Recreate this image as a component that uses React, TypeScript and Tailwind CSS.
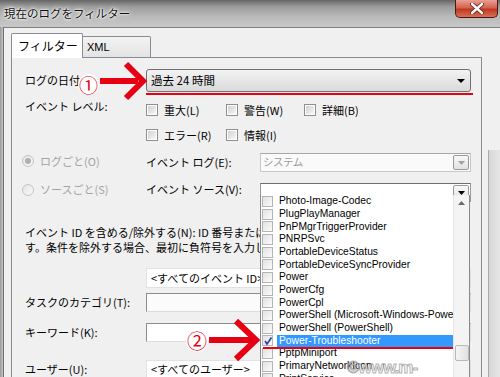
import React from "react";

const listItems = [
  "Photo-Image-Codec",
  "PlugPlayManager",
  "PnPMgrTriggerProvider",
  "PNRPSvc",
  "PortableDeviceStatus",
  "PortableDeviceSyncProvider",
  "Power",
  "PowerCfg",
  "PowerCpl",
  "PowerShell (Microsoft-Windows-PowerShell)",
  "PowerShell (PowerShell)",
  "Power-Troubleshooter",
  "PptpMiniport",
  "PrimaryNetworkIcon",
  "PrintService",
];

function Check() {
  return (
    <span className="inline-flex w-[12px] h-[12px] shrink-0 border border-[#8e8f8f] bg-white p-[1px]">
      <span className="flex-1 bg-gradient-to-br from-[#cfd2d6] to-[#f7f7f7]" />
    </span>
  );
}

function Radio({ dot = false }: { dot?: boolean }) {
  return (
    <span className="inline-flex w-[12px] h-[12px] shrink-0 rounded-full border border-[#c4c4c4] bg-gradient-to-br from-[#e4e4e4] to-[#fafafa] items-center justify-center">
      {dot && <span className="w-[6px] h-[6px] rounded-full bg-[#b0b0b0]" />}
    </span>
  );
}

function ListCheck({ checked = false }: { checked?: boolean }) {
  return (
    <span className="relative inline-flex w-[11px] h-[11px] shrink-0 border border-[#b4b4b4] bg-gradient-to-br from-[#e2e2e2] to-[#fbfbfb]">
      {checked && (
        <svg className="absolute left-[0px] top-[0px]" width="10" height="10" viewBox="0 0 10 10">
          <path d="M2 5 L4 8 L8.5 1.5" fill="none" stroke="#2b3fa8" strokeWidth="1.6" />
        </svg>
      )}
    </span>
  );
}

function DropBtn({ disabled = false }: { disabled?: boolean }) {
  return (
    <span className="mr-[1px] w-[16px] h-[15px] flex items-center justify-center border border-[#9a9a9a] rounded-[2px] bg-gradient-to-b from-[#f8f8f8] to-[#e2e2e2]">
      <svg width="7" height="4" viewBox="0 0 7 4">
        <path d="M0 0 L7 0 L3.5 4 Z" fill={disabled ? "#a0a0a0" : "#000"} />
      </svg>
    </span>
  );
}

export default function App() {
  return (
    <div className="relative w-[500px] h-[377px] overflow-hidden flex flex-col bg-[#f0f0f0] font-['Noto_Sans_CJK_JP',sans-serif] text-[11px] leading-none text-black">
      {/* Title bar */}
      <div className="h-[27px] shrink-0 flex items-start justify-between bg-[linear-gradient(to_bottom,#666666_0%,#9c9c9c_25%,#b8b8b8_60%,#c8c8c8_100%)]">
        <div className="pl-[4px] pt-[8px] text-[11.5px] text-[#111] [text-shadow:0_0_6px_#fff,0_0_3px_#fff,0_0_2px_#fff]">
          現在のログをフィルター
        </div>
        <div className="mr-[2px] w-[43px] h-[18px] flex items-center justify-center rounded-b-[5px] border border-t-0 border-[#4a1a12] bg-[linear-gradient(to_bottom,#e8a093_0%,#d4634f_45%,#c0391f_55%,#d8705a_100%)]">
          <svg width="14" height="11" viewBox="0 0 14 11">
            <path d="M2 1 L12 10 M12 1 L2 10" stroke="#5a1c12" strokeWidth="4" strokeLinecap="round" />
            <path d="M2 1 L12 10 M12 1 L2 10" stroke="#ffffff" strokeWidth="2.4" strokeLinecap="round" />
          </svg>
        </div>
      </div>

      <div className="flex flex-1 min-h-0">
        <div className="w-[4px] shrink-0 bg-[linear-gradient(to_right,#9a9a9a,#c4c4c4)] border-r border-[#6f6f6f]" />
        <div className="flex-1 flex border-t border-[#7f7f7f] bg-[#f0f0f0]">
          <div className="pl-[7px] pt-[5px] flex flex-col">
            {/* Tabs */}
            <div className="h-[24px] flex items-end">
              <div className="relative z-10 -mb-[1px] w-[72px] h-[25px] border-l border-t border-r border-[#898c95] rounded-t-[2px] bg-white flex items-start pt-[6px] pl-[6px] text-[12px]">
                フィルター
              </div>
              <div className="w-[68px] h-[21px] border-t border-r border-[#898c95] rounded-tr-[2px] bg-gradient-to-b from-[#f3f3f3] to-[#e3e3e3] flex items-center pl-[4px] text-[11px] font-['Liberation_Sans',sans-serif]">
                XML
              </div>
            </div>

            {/* Panel */}
            <div className="w-[471px] flex-1 border-l border-t border-r border-[#898c95] bg-[#f0f0f0] pl-[10px] pr-[10px] flex flex-col">
              {/* Date */}
              <div className="mt-[11px] h-[23px] flex items-center">
                <div className="w-[124px] pl-[3px]">ログの日付(D):</div>
                <div className="flex-1 h-[23px] border border-[#707070] rounded-[3px] bg-gradient-to-b from-[#f3f3f3] to-[#dadada] flex items-center justify-between pl-[4px] pr-[5px]">
                  <span className="text-[11.5px]">過去 24 時間</span>
                  <svg width="8" height="4" viewBox="0 0 8 4">
                    <path d="M0 0 L8 0 L4 4 Z" fill="#000" />
                  </svg>
                </div>
              </div>

              {/* Level */}
              <div className="mt-[6px] flex">
                <div className="w-[124px] pl-[3px] pt-[3px]">イベント レベル:</div>
                <div className="flex flex-col gap-[1px]">
                  <div className="h-[24px] flex items-center">
                    <div className="w-[80px] flex items-center gap-[6px]"><Check /><span>重大(L)</span></div>
                    <div className="w-[78px] flex items-center gap-[6px]"><Check /><span>警告(W)</span></div>
                    <div className="flex items-center gap-[6px]"><Check /><span>詳細(B)</span></div>
                  </div>
                  <div className="h-[24px] flex items-center">
                    <div className="w-[80px] flex items-center gap-[6px]"><Check /><span>エラー(R)</span></div>
                    <div className="w-[78px] flex items-center gap-[6px]"><Check /><span>情報(I)</span></div>
                  </div>
                </div>
              </div>

              {/* Event log */}
              <div className="mt-[6px] h-[19px] flex items-center">
                <div className="w-[124px] flex items-center gap-[6px] text-[#a3a3a3] pb-[3px]">
                  <Radio dot />
                  <span>ログごと(O)</span>
                </div>
                <div className="w-[114px] pb-[1px]">イベント ログ(E):</div>
                <div className="flex-1 h-[19px] border border-[#c8c8c8] border-t-[#a8a8a8] bg-[#fafafa] flex items-center justify-between pl-[2px]">
                  <span className="text-[#9a9a9a] text-[10.5px] tracking-[-0.5px]">システム</span>
                  <DropBtn disabled />
                </div>
              </div>

              {/* Event source */}
              <div className="mt-[11px] h-[19px] flex items-center">
                <div className="w-[124px] flex items-center gap-[6px] text-[#a3a3a3] pb-[6px]">
                  <Radio />
                  <span>ソースごと(S)</span>
                </div>
                <div className="w-[114px] pb-[6px]">イベント ソース(V):</div>
                <div className="flex-1 h-[19px] border border-[#9a9a9a] border-t-[#6e6e6e] bg-white flex items-start justify-end pt-[1px]">
                  <DropBtn />
                </div>
              </div>

              {/* Event ID description */}
              <div className="mt-[23px] pl-[3px] leading-[15px] whitespace-nowrap overflow-hidden">
                イベント ID を含める/除外する(N): ID 番号または ID の範囲をコンマで区切って入力しま
                <br />
                す。条件を除外する場合、最初に負符号を入力してください。例: 1,3,5-99,-76
              </div>

              <div className="mt-[13px] ml-[124px] h-[20px] border border-[#e0e2e8] bg-white flex items-center pl-[4px]">
                &lt;すべてのイベント ID&gt;
              </div>

              {/* Task category */}
              <div className="mt-[5px] h-[19px] flex items-center">
                <div className="w-[124px] pl-[3px]">タスクのカテゴリ(T):</div>
                <div className="flex-1 h-[19px] border border-[#dcdcdc] border-t-[#8c8c8c] border-l-[#8c8c8c] bg-[#fbfbfb]" />
              </div>

              {/* Keyword */}
              <div className="mt-[11px] h-[19px] flex items-center">
                <div className="w-[124px] pl-[3px]">キーワード(K):</div>
                <div className="flex-1 h-[19px] border border-[#dcdcdc] border-t-[#8c8c8c] border-l-[#8c8c8c] bg-white" />
              </div>

              {/* User */}
              <div className="mt-[18px] h-[19px] flex items-center">
                <div className="w-[124px] pl-[3px]">ユーザー(U):</div>
                <div className="flex-1 h-[19px] border border-[#e0e2e8] bg-white flex items-center pl-[4px]">
                  &lt;すべてのユーザー&gt;
                </div>
              </div>
            </div>
          </div>
          <div className="flex-1 flex flex-col pl-[6px]">
            <div className="h-[122px]" />
            <div className="flex-1 border-l border-[#a8a8a8] bg-gradient-to-r from-[#d8d8d8] to-[#e6e6e6]" />
          </div>
        </div>
      </div>

      {/* Dropdown list overlay */}
      <div className="absolute left-[260px] top-[195px] w-[210px] h-[190px] border border-t-0 border-[#8a8a8a] bg-white flex font-['Liberation_Sans',Arial,sans-serif] text-[10.3px] leading-none">
        <div className="flex-1 flex flex-col overflow-hidden">
          {listItems.map((it) => {
            const sel = it === "Power-Troubleshooter";
            return (
              <div key={it} className="h-[12.7px] shrink-0 flex items-center pl-[1px]">
                <ListCheck checked={sel} />
                <div className={sel ? "ml-[4px] flex-1 h-full flex items-center pl-[2px] bg-[#3399ff] text-white whitespace-nowrap overflow-hidden" : "ml-[4px] flex-1 h-full flex items-center pl-[2px] text-black whitespace-nowrap overflow-hidden"}>
                  {it}
                </div>
              </div>
            );
          })}
        </div>
        <div className="w-[16px] shrink-0 border-l border-[#e6e6e6] bg-[#f4f4f4] flex flex-col items-center">
          <svg className="mt-[6px]" width="7" height="4" viewBox="0 0 7 4">
            <path d="M0 4 L7 4 L3.5 0 Z" fill="#6a6a6a" />
          </svg>
          <div className="mt-[140px] w-[14px] h-[16px] rounded-[2px] border border-[#b8b8b8] bg-gradient-to-r from-[#f4f4f4] to-[#e2e2e2]" />
        </div>
      </div>

      {/* Red underlines */}
      <div className="absolute left-[146px] top-[93px] w-[327px] h-[2px] bg-[#e60012]" />
      <div className="absolute left-[263px] top-[347px] w-[190px] h-[2px] bg-[#e60012]" />

      {/* Arrows */}
      <svg className="absolute left-0 top-0 pointer-events-none" width="500" height="377" viewBox="0 0 500 377">
        <path d="M100 81 L138 81" stroke="#e60012" strokeWidth="6" />
        <path d="M126 64 L143 81 L126 98" fill="none" stroke="#e60012" strokeWidth="6" strokeLinejoin="miter" />
        <path d="M209 340 L252 340" stroke="#e60012" strokeWidth="6" />
        <path d="M236 321 L256 340 L236 359" fill="none" stroke="#e60012" strokeWidth="6" strokeLinejoin="miter" />
      </svg>

      {/* Circled numbers */}
      <div className="absolute left-[78px] top-[74px] w-[21px] h-[21px] rounded-full bg-white flex items-center justify-center text-[19px] text-[#e60012] leading-none">
        ①
      </div>
      <div className="absolute left-[186px] top-[330px] w-[22px] h-[22px] rounded-full bg-white flex items-center justify-center text-[20px] text-[#e60012] leading-none">
        ②
      </div>

      {/* Watermark */}
      <div className="absolute left-[347px] top-[359px] font-['Liberation_Sans',Arial,sans-serif] font-bold text-[17px] leading-none tracking-[-1px] text-[rgba(255,255,255,0.75)] [-webkit-text-stroke:1px_rgba(110,110,110,0.55)]">
        ©www.m-biotics.com
      </div>
    </div>
  );
}
